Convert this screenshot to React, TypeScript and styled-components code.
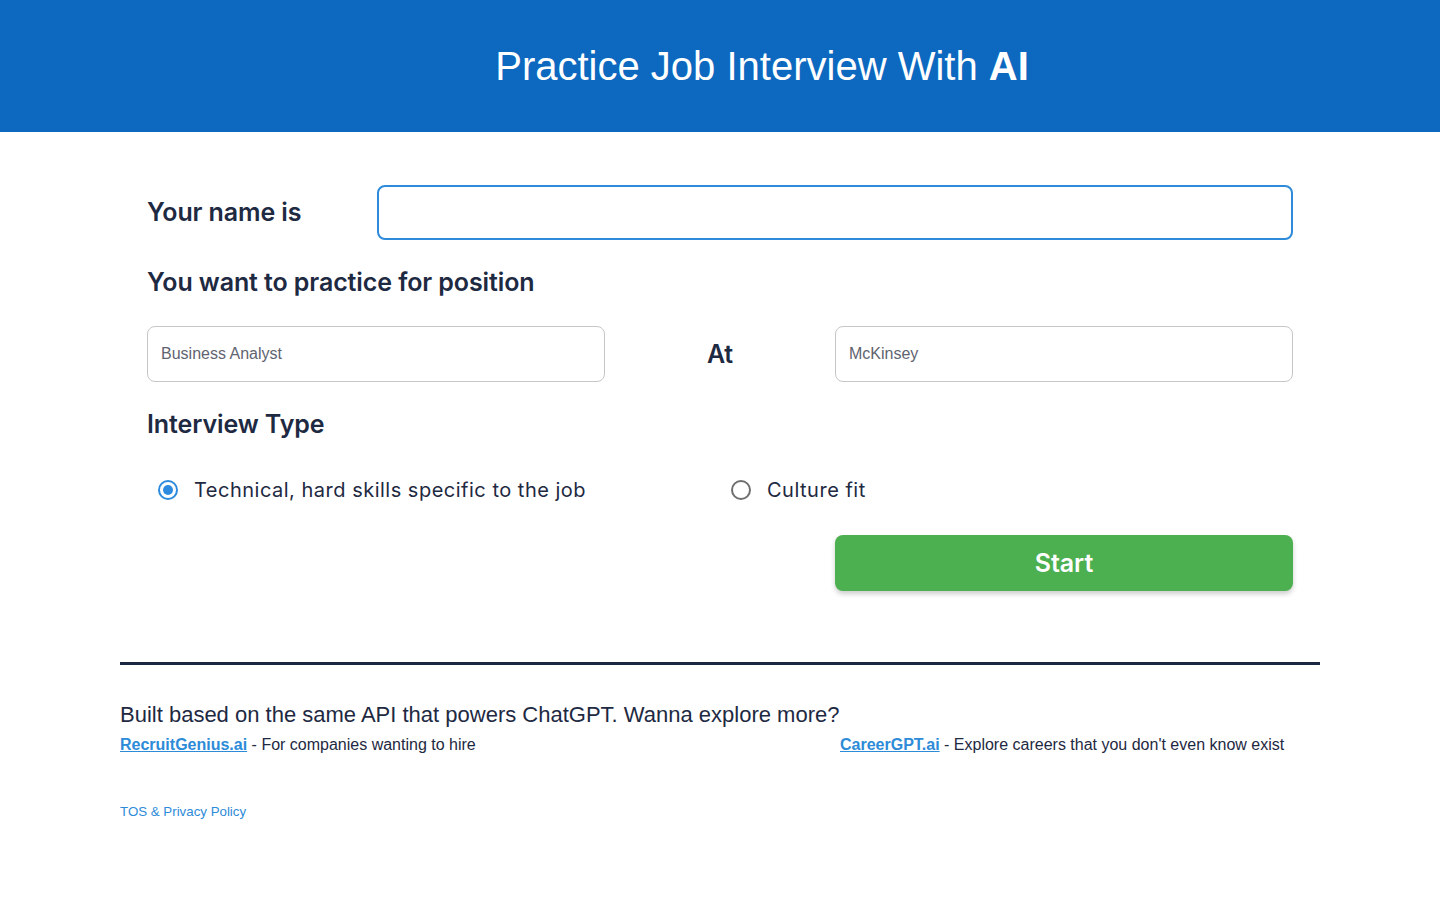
import React, { useState } from 'react';
import styled, { createGlobalStyle } from 'styled-components';

const Global = createGlobalStyle`
  body {
    margin: 0;
    background: #fff;
    font-family: "Liberation Sans", Arial, sans-serif;
    color: #1e2942;
  }
  * { box-sizing: border-box; }
`;

const Header = styled.header`
  background: #0c69bf;
  height: 132px;
  display: flex;
  align-items: center;
  justify-content: center;
  padding-left: 84px;
`;

const Title = styled.h1`
  margin: 0;
  color: #fff;
  font-weight: 400;
  font-size: 40px;
  b { font-weight: 700; }
`;

const Page = styled.div`
  width: 1200px;
  margin: 0 auto;
`;

const Form = styled.form`
  padding: 52px 27px 0;
  display: flex;
  flex-direction: column;
`;

const Heading = styled.div<{ $gap?: number }>`
  margin-top: ${p => p.$gap ?? 0}px;
  font-family: Inter, "Noto Sans", sans-serif;
  font-weight: 600;
  font-size: 25px;
  letter-spacing: -0.1px;
  color: #1e2942;
`;

const NameRow = styled.div`
  display: grid;
  grid-template-columns: 230px 1fr;
  align-items: center;
  height: 56px;
`;

const PositionRow = styled.div`
  display: grid;
  grid-template-columns: 458px 1fr 458px;
  align-items: center;
  margin-top: 29px;
`;

const Input = styled.input<{ $focus?: boolean }>`
  height: ${p => (p.$focus ? 55 : 56)}px;
  width: 100%;
  border: ${p => (p.$focus ? '2px solid #2d8bda' : '1px solid #c6c6c6')};
  border-radius: 8px;
  padding: 0 13px;
  font-family: "Liberation Sans", Arial, sans-serif;
  font-size: 16px;
  color: #333;
  outline: none;
  &::placeholder { color: #5f6470; }
`;

const At = styled(Heading)`
  text-align: center;
`;

const RadioRow = styled.div`
  display: grid;
  grid-template-columns: 1fr 1fr;
  margin-top: 39px;
`;

const RadioLabel = styled.label`
  display: flex;
  align-items: center;
  gap: 16px;
  padding-left: 11px;
  font-family: Inter, "Noto Sans", sans-serif;
  font-size: 20px;
  letter-spacing: 0.5px;
  color: #1e2942;
  cursor: pointer;
`;

const Dot = styled.span<{ $on: boolean }>`
  width: 20px;
  height: 20px;
  border-radius: 50%;
  border: 2px solid ${p => (p.$on ? '#2d8bdf' : '#6f6f6f')};
  display: flex;
  align-items: center;
  justify-content: center;
  &::after {
    content: '';
    width: 10px;
    height: 10px;
    border-radius: 50%;
    background: ${p => (p.$on ? '#2d8bdf' : 'transparent')};
  }
`;

const ButtonRow = styled.div`
  display: grid;
  grid-template-columns: 1fr 458px;
  margin-top: 33px;
`;

const StartButton = styled.button`
  grid-column: 2;
  height: 56px;
  border: none;
  border-radius: 8px;
  background: #4caf50;
  color: #fff;
  font-family: Inter, "Noto Sans", sans-serif;
  font-weight: 600;
  font-size: 25px;
  letter-spacing: -0.1px;
  box-shadow: 0 3px 5px rgba(0, 0, 0, 0.2);
  cursor: pointer;
`;

const Rule = styled.hr`
  margin: 71px 0 0;
  border: none;
  height: 3px;
  background: #1b2740;
`;

const Footer = styled.footer`
  padding-top: 37px;
  font-size: 16px;
  color: #1e2942;
`;

const Intro = styled.p`
  margin: 0;
  font-size: 22px;
`;

const Links = styled.div`
  display: grid;
  grid-template-columns: 720px 1fr;
  margin-top: 8px;
`;

const Link = styled.a`
  color: #2d8bd8;
  font-weight: 700;
  text-decoration: underline;
`;

const Legal = styled.a`
  display: block;
  margin-top: 50px;
  font-size: 13.3px;
  color: #2d8bd8;
  text-decoration: none;
`;

export default function App() {
  const [kind, setKind] = useState<'tech' | 'culture'>('tech');
  return (
    <>
      <Global />
      <Header>
        <Title>Practice Job Interview With <b>AI</b></Title>
      </Header>
      <Page>
        <Form onSubmit={e => e.preventDefault()}>
          <NameRow>
            <Heading>Your name is</Heading>
            <Input $focus />
          </NameRow>
          <Heading $gap={27}>You want to practice for position</Heading>
          <PositionRow>
            <Input placeholder="Business Analyst" />
            <At>At</At>
            <Input placeholder="McKinsey" />
          </PositionRow>
          <Heading $gap={27}>Interview Type</Heading>
          <RadioRow>
            <RadioLabel onClick={() => setKind('tech')}>
              <Dot $on={kind === 'tech'} />
              Technical, hard skills specific to the job
            </RadioLabel>
            <RadioLabel onClick={() => setKind('culture')}>
              <Dot $on={kind === 'culture'} />
              Culture fit
            </RadioLabel>
          </RadioRow>
          <ButtonRow>
            <StartButton type="submit">Start</StartButton>
          </ButtonRow>
        </Form>
        <Rule />
        <Footer>
          <Intro>Built based on the same API that powers ChatGPT. Wanna explore more?</Intro>
          <Links>
            <span><Link href="#">RecruitGenius.ai</Link> - For companies wanting to hire</span>
            <span><Link href="#">CareerGPT.ai</Link> - Explore careers that you don't even know exist</span>
          </Links>
          <Legal href="#">TOS &amp; Privacy Policy</Legal>
        </Footer>
      </Page>
    </>
  );
}
